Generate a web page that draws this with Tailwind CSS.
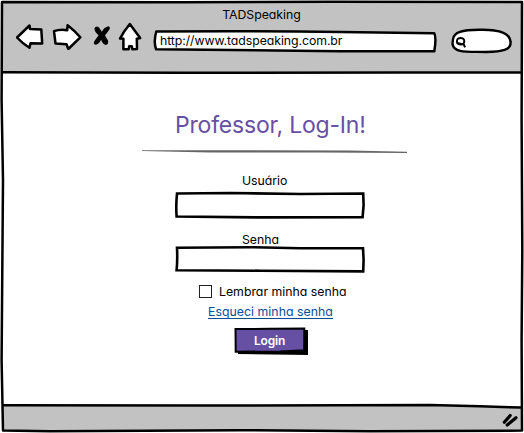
<!DOCTYPE html>
<html lang="pt-BR">
<head>
<meta charset="utf-8">
<title>TADSpeaking</title>
<script src="https://cdn.jsdelivr.net/npm/@tailwindcss/browser@4"></script>
</head>
<body class="bg-white overflow-hidden">
<div class="relative w-[524px] h-[433px] flex flex-col overflow-hidden bg-white text-black font-['Inter','Noto_Sans',sans-serif] [font-feature-settings:'cv11'] text-[12.3px] leading-[18px]">
  <header class="h-[71px] shrink-0 ml-[2px] mr-[3px] mt-[2px] bg-[#c2c2c2] flex flex-col">
    <div class="h-[24px] pt-[4px] text-center"><span class="tracking-[-0.03px]">TADSpeaking</span></div>
    <div class="flex items-start pl-[14px]">
      <svg class="w-[28px] h-[28px] shrink-0 -mt-[4px]" viewBox="16 22 28 28" fill="#fff" stroke="#000" stroke-width="2.5" stroke-linejoin="round"><path d="M17 37.5 L29.5 25.5 L30 29 L41.3 29.5 L42.2 43.5 L30.5 43.2 L29.5 47.8 Q22 43 17 37.5Z"/></svg>
      <svg class="w-[30px] h-[28px] shrink-0 ml-[8px] -mt-[4px]" viewBox="52 22 30 28" fill="#fff" stroke="#000" stroke-width="2.5" stroke-linejoin="round"><path d="M54 31.2 Q60 29 67.2 30.2 L67.6 25.2 Q74 30 80.3 37.3 L68.3 49 L66.5 44.2 L55.5 43.5Z"/></svg>
      <svg class="w-[18px] h-[22px] shrink-0 ml-[11px]" viewBox="93 26 18 22" fill="#000"><path d="M94.4 28.2 Q96 25.4 98.8 27.2 L101.9 31.8 Q104 27 108.6 26.2 Q111 27.4 108.9 30.2 L105 35.5 L108 40.5 Q108.8 44.8 105.8 45 Q103 44.6 101 39.8 Q99 44.4 95.6 44.7 Q92.8 44 94.3 41.2 L98.6 35.2 Q94.4 32 94.4 28.2Z"/></svg>
      <svg class="w-[24px] h-[30px] shrink-0 ml-[7px] -mt-[4px]" viewBox="118 22 24 30" fill="#fff" stroke="#000" stroke-width="2.5" stroke-linejoin="round"><path d="M129.8 24 L140.2 38 L136.8 38.8 L137 49 L132.4 49.2 L131.8 46.2 L129.2 46.2 L128.8 49.2 L123.4 49.3 L123.4 38.8 L120 38.6 Q124 31 129.8 24Z"/></svg>
      <div class="relative w-[286px] h-[24px] shrink-0 ml-[11px] mt-[3px]">
        <svg class="absolute inset-0 w-full h-full" viewBox="153 29 286 24" fill="#fff" stroke="#000" stroke-width="2.5" stroke-linejoin="round"><path d="M156.3 31.5 Q250 30.6 340 32 L434.2 33.2 Q436.6 37 434.3 51.3 L340 51.2 L156 49.2 Q153.4 41 156.3 31.5Z"/></svg>
        <span class="relative block pl-[7px] pt-[3px] whitespace-nowrap tracking-[-0.07px]">http://www.tadspeaking.com.br</span>
      </div>
      <svg class="w-[62px] h-[26px] shrink-0 ml-[11px] mt-[2px]" viewBox="450 28 62 26" fill="#fff" stroke="#000" stroke-width="2.4"><path d="M453 39 C454 32 462 30 479 29.8 C499 29.2 510 33 510.5 42 C511.5 50 502 51.5 486 52 C468 51.5 454 53.5 452.5 44 Z"/><ellipse cx="460.6" cy="41.2" rx="3.7" ry="3.3" stroke-width="2"/><path d="M456.6 43 L463.8 44.4 L465 47.4" stroke-width="2" fill="none"/></svg>
    </div>
  </header>

  <main class="h-[333px] shrink-0 pt-[2px] pl-[3px] flex flex-col">
    <h1 class="h-[75px] pt-[35px] pl-[172px] text-[23px] leading-[30px] text-[#6650a4] whitespace-nowrap"><span class="tracking-[-0.2px]">Professor, Log-In!</span></h1>
    <svg class="w-[266px] h-[4px] ml-[138px] shrink-0" viewBox="141 149 266 4"><path d="M142 149.2 L230 149.2 L350 149.5 L407 150.8 V152 L320 151.6 L210 151.5 L142 150Z" fill="#666"/></svg>
    <form class="flex flex-col pl-[172px]">
      <label class="ml-[67px] mt-[18px] h-[18px] tracking-[-0.05px]">Usuário</label>
      <svg class="w-[190px] h-[28px] mt-[1px]" viewBox="175 191 190 28" fill="#fff" stroke="#000" stroke-width="2.6"><path d="M177 193.5 L230 193 L300 194 L363.2 193.5 L363.6 205 L362.6 217.2 L260 217.4 L176.6 216.5 Q175.8 206 177 193.5Z"/></svg>
      <label class="ml-[67px] mt-[12px] h-[14px] tracking-[-0.05px]">Senha</label>
      <svg class="w-[190px] h-[28px]" viewBox="175 245 190 28" fill="#fff" stroke="#000" stroke-width="2.6"><path d="M177 247.8 L250 247.2 L300 248.2 L363 248.3 L363.6 260 L363.2 271.4 L260 270.7 L176.6 270.2 Q177.6 260 177 247.8Z"/></svg>
      <label class="flex items-center ml-[24px] mt-[9px] h-[18px]">
        <span class="w-[13px] h-[13px] border border-[#222] bg-white"></span>
        <span class="ml-[7px] pt-[2px] whitespace-nowrap">Lembrar minha senha</span>
      </label>
      <a class="ml-[33px] mt-[3px] h-[16px] w-[125px] whitespace-nowrap border-b border-[#0b4d99] text-[#0b4d99] tracking-[0.03px] leading-[17px]">Esqueci minha senha</a>
      <button type="button" class="relative ml-[59px] mt-[8px] w-[75px] h-[29px] text-white font-semibold">
        <svg class="absolute inset-0 w-full h-full" viewBox="234 327 75 29"><path d="M238 331 L308 330 L308 355 L238 354Z"/><path d="M235.5 329 L270 328.8 L304.3 328.4 L304.2 350.2 L280 351.4 L235.7 351.8Z" fill="#6650a4" stroke="#000" stroke-width="2"/></svg>
        <span class="relative block pl-[20px] text-left -mt-[2px] text-[12px] tracking-[-0.2px]">Login</span>
      </button>
    </form>
  </main>
  <footer class="h-[25px] shrink-0 ml-[2px] mr-[3px] bg-[#c2c2c2] flex justify-end items-start pr-[3px]">
    <svg class="w-[17px] h-[14px] mt-[7px] shrink-0" viewBox="501 413 17 14" stroke="#000" stroke-width="3.2" stroke-linecap="round"><path d="M504.3 422.3 L510.2 415.5 M507.2 425 L516 417.8"/></svg>
  </footer>

  <svg class="absolute inset-0 w-[524px] h-[433px] pointer-events-none" viewBox="0 0 524 433" fill="none" stroke="#000" stroke-width="2.5" stroke-linejoin="round">
    <path d="M440 405 L480 406.3 L521 407.6 V404.6 Z" fill="#fff" stroke="none"/>
    <path d="M2 2 L180 2.2 L330 1.8 L522 2 L521.6 120 L522.3 250 L521.6 340 L522 430.6 L370 431.2 L240 430.2 L50 431.2 L3 430.4 L1.6 360 L3 180 L1.6 100 Z"/>
    <path d="M2 72.2 L180 72.8 L400 72.4 L522 72.4"/>
    <path d="M2 405.2 L200 405.6 L430 405 L480 406.3 L522 407.6"/>
  </svg>
</div>
</body>
</html>
